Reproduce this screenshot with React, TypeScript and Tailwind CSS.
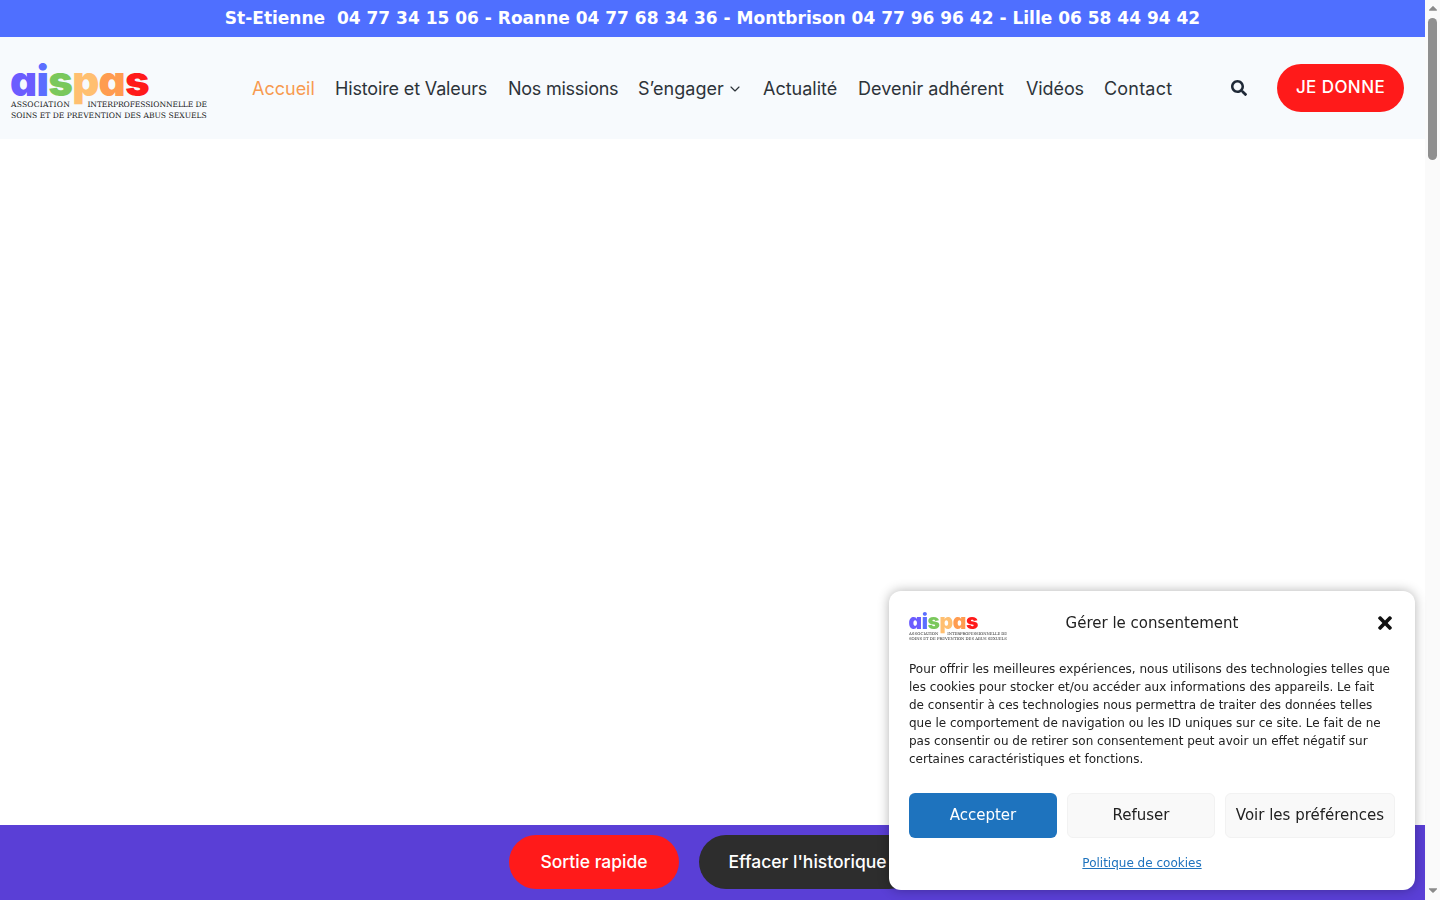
import React from 'react';
import { ChevronDown } from 'lucide-react';
import { FaCaretDown, FaCaretUp, FaSearch, FaTimes } from 'react-icons/fa';

const navItems = [
  { label: 'Histoire et Valeurs', className: 'w-[153px] tracking-[-0.15px]' },
  { label: 'Nos missions', className: 'w-[110px] tracking-[-0.25px]' },
];
const navItemsEnd = [
  { label: 'Actualité', className: 'w-[75px]' },
  { label: 'Devenir adhérent', className: 'w-[148px]' },
  { label: 'Vidéos', className: 'w-[58px] tracking-[-0.1px]' },
  { label: 'Contact', className: 'w-[69px] tracking-[0.2px]' },
];

function Logo({ small }: { small?: boolean }) {
  return (
    <div className={small ? 'w-[98px] [zoom:0.5]' : 'w-[196px]'}>
      <div className="flex w-[196px] flex-col">
        <div className="-ml-[1px] h-[44px] pt-[2px] font-['Inter',sans-serif] text-[42px] leading-[46px] font-black tracking-[-0.7px] [font-feature-settings:'cv11']">
          <span className="text-[#6b5cff]">a</span>
          <span className="text-[#5b6eff]">i</span>
          <span className="text-[#7ac85c]">s</span>
          <span className="text-[#ffbf70]">p</span>
          <span className="text-[#ff9c50]">a</span>
          <span className="text-[#ff1a1a]">s</span>
        </div>
        <div className="-mt-[1px] flex justify-between font-['DejaVu_Serif',serif] text-[7.6px] leading-[11px] text-[#222]">
          <span className="tracking-[0.2px]">ASSOCIATION</span>
          <span className="tracking-[-0.1px]">INTERPROFESSIONNELLE DE</span>
        </div>
        <div className="font-['DejaVu_Serif',serif] text-[7.6px] leading-[11px] whitespace-nowrap text-[#222]">
          SOINS ET DE PREVENTION DES ABUS SEXUELS
        </div>
      </div>
    </div>
  );
}

function ConsentModal() {
  return (
    <div className="fixed right-[25px] bottom-[10px] z-20 h-[299px] w-[526px] rounded-xl bg-white px-5 pt-[18px] font-['DejaVu_Sans',sans-serif] text-[#222] shadow-[0_0_12px_rgba(0,0,0,0.3)]">
      <div className="grid h-[28px] grid-cols-[1fr_auto_1fr] items-center">
        <Logo small />
        <div className="-mt-[5px] text-[15px] leading-6">Gérer le consentement</div>
        <div className="-mt-[5px] flex justify-end">
          <FaTimes size={20} className="text-[#111]" />
        </div>
      </div>
      <p className="mt-[23px] w-[483px] text-[12px] leading-[18px] text-[#222]">
        Pour offrir les meilleures expériences, nous utilisons des technologies telles que les cookies pour stocker
        et/ou accéder aux informations des appareils. Le fait de consentir à ces technologies nous permettra de traiter
        des données telles que le comportement de navigation ou les ID uniques sur ce site. Le fait de ne pas consentir
        ou de retirer son consentement peut avoir un effet négatif sur certaines caractéristiques et fonctions.
      </p>
      <div className="mt-[25px] flex gap-[10px] text-[15px]">
        <button className="h-[45px] w-[148px] rounded-md bg-[#1e73be] text-white">Accepter</button>
        <button className="h-[45px] w-[148px] rounded-md border border-[#f2f2f2] bg-[#f9f9f9]">Refuser</button>
        <button className="h-[45px] w-[170px] rounded-md border border-[#f2f2f2] bg-[#f9f9f9]">Voir les préférences</button>
      </div>
      <div className="mt-[16px] pr-5 text-center text-[12px] leading-[18px]">
        <a className="text-[#1e73be] underline">Politique de cookies</a>
      </div>
    </div>
  );
}

function Scrollbar() {
  return (
    <div className="flex h-full w-[15px] flex-col items-center bg-[#fafafa] text-[#8a8a8a]">
      <div className="flex h-[16px] items-center justify-center">
        <FaCaretUp size={14} />
      </div>
      <div className="mt-[2px] h-[142px] w-[9px] rounded-full bg-[#8f8f8f]" />
      <div className="mt-auto mb-[1px] flex h-[18px] items-center justify-center">
        <FaCaretDown size={14} />
      </div>
    </div>
  );
}

export default function App() {
  return (
    <div className="flex h-screen w-full overflow-hidden bg-white font-['Inter',sans-serif] text-[#2d3339]">
      <div className="flex h-full w-[1425px] flex-col">
        <div className="flex h-[37px] shrink-0 items-center justify-center bg-[#4f6fff] font-['DejaVu_Sans',sans-serif] text-[17px] font-bold whitespace-pre text-white">
          St-Etienne  04 77 34 15 06 - Roanne 04 77 68 34 36 - Montbrison 04 77 96 96 42 - Lille 06 58 44 94 42
        </div>

        <header className="flex h-[102px] shrink-0 items-center bg-[#f7fafd] pr-[21px] pl-[11px]">
          <Logo />
          <nav className="ml-[45px] flex items-center gap-5 text-[18px] whitespace-nowrap">
            <a className="w-[63px] text-[#f79a50]">Accueil</a>
            {navItems.map((item) => (
              <a key={item.label} className={item.className}>
                {item.label}
              </a>
            ))}
            <a className="flex w-[105px] items-center gap-[3px]">
              S’engager
              <ChevronDown size={16} strokeWidth={1.75} className="mt-[2px]" />
            </a>
            {navItemsEnd.map((item) => (
              <a key={item.label} className={item.className}>
                {item.label}
              </a>
            ))}
          </nav>
          <div className="ml-auto flex items-center gap-[30px]">
            <FaSearch size={16} className="text-[#1f2937]" />
            <button className="h-[48px] w-[127px] rounded-3xl bg-[#ff1a1a] text-[17px] font-medium tracking-wide text-white">
              JE DONNE
            </button>
          </div>
        </header>

        <main className="flex-1" />

        <div className="flex h-[75px] shrink-0 justify-center gap-5 bg-[#5a3fd6] pt-[10px] text-[17.5px] font-medium text-white">
          <button className="h-[54px] w-[170px] rounded-full bg-[#ff1a1a] pt-[1px]">Sortie rapide</button>
          <button className="h-[54px] w-[217px] rounded-full bg-[#2d2d2d] pt-[1px]">Effacer l'historique</button>
        </div>
      </div>

      <Scrollbar />
      <ConsentModal />
    </div>
  );
}
